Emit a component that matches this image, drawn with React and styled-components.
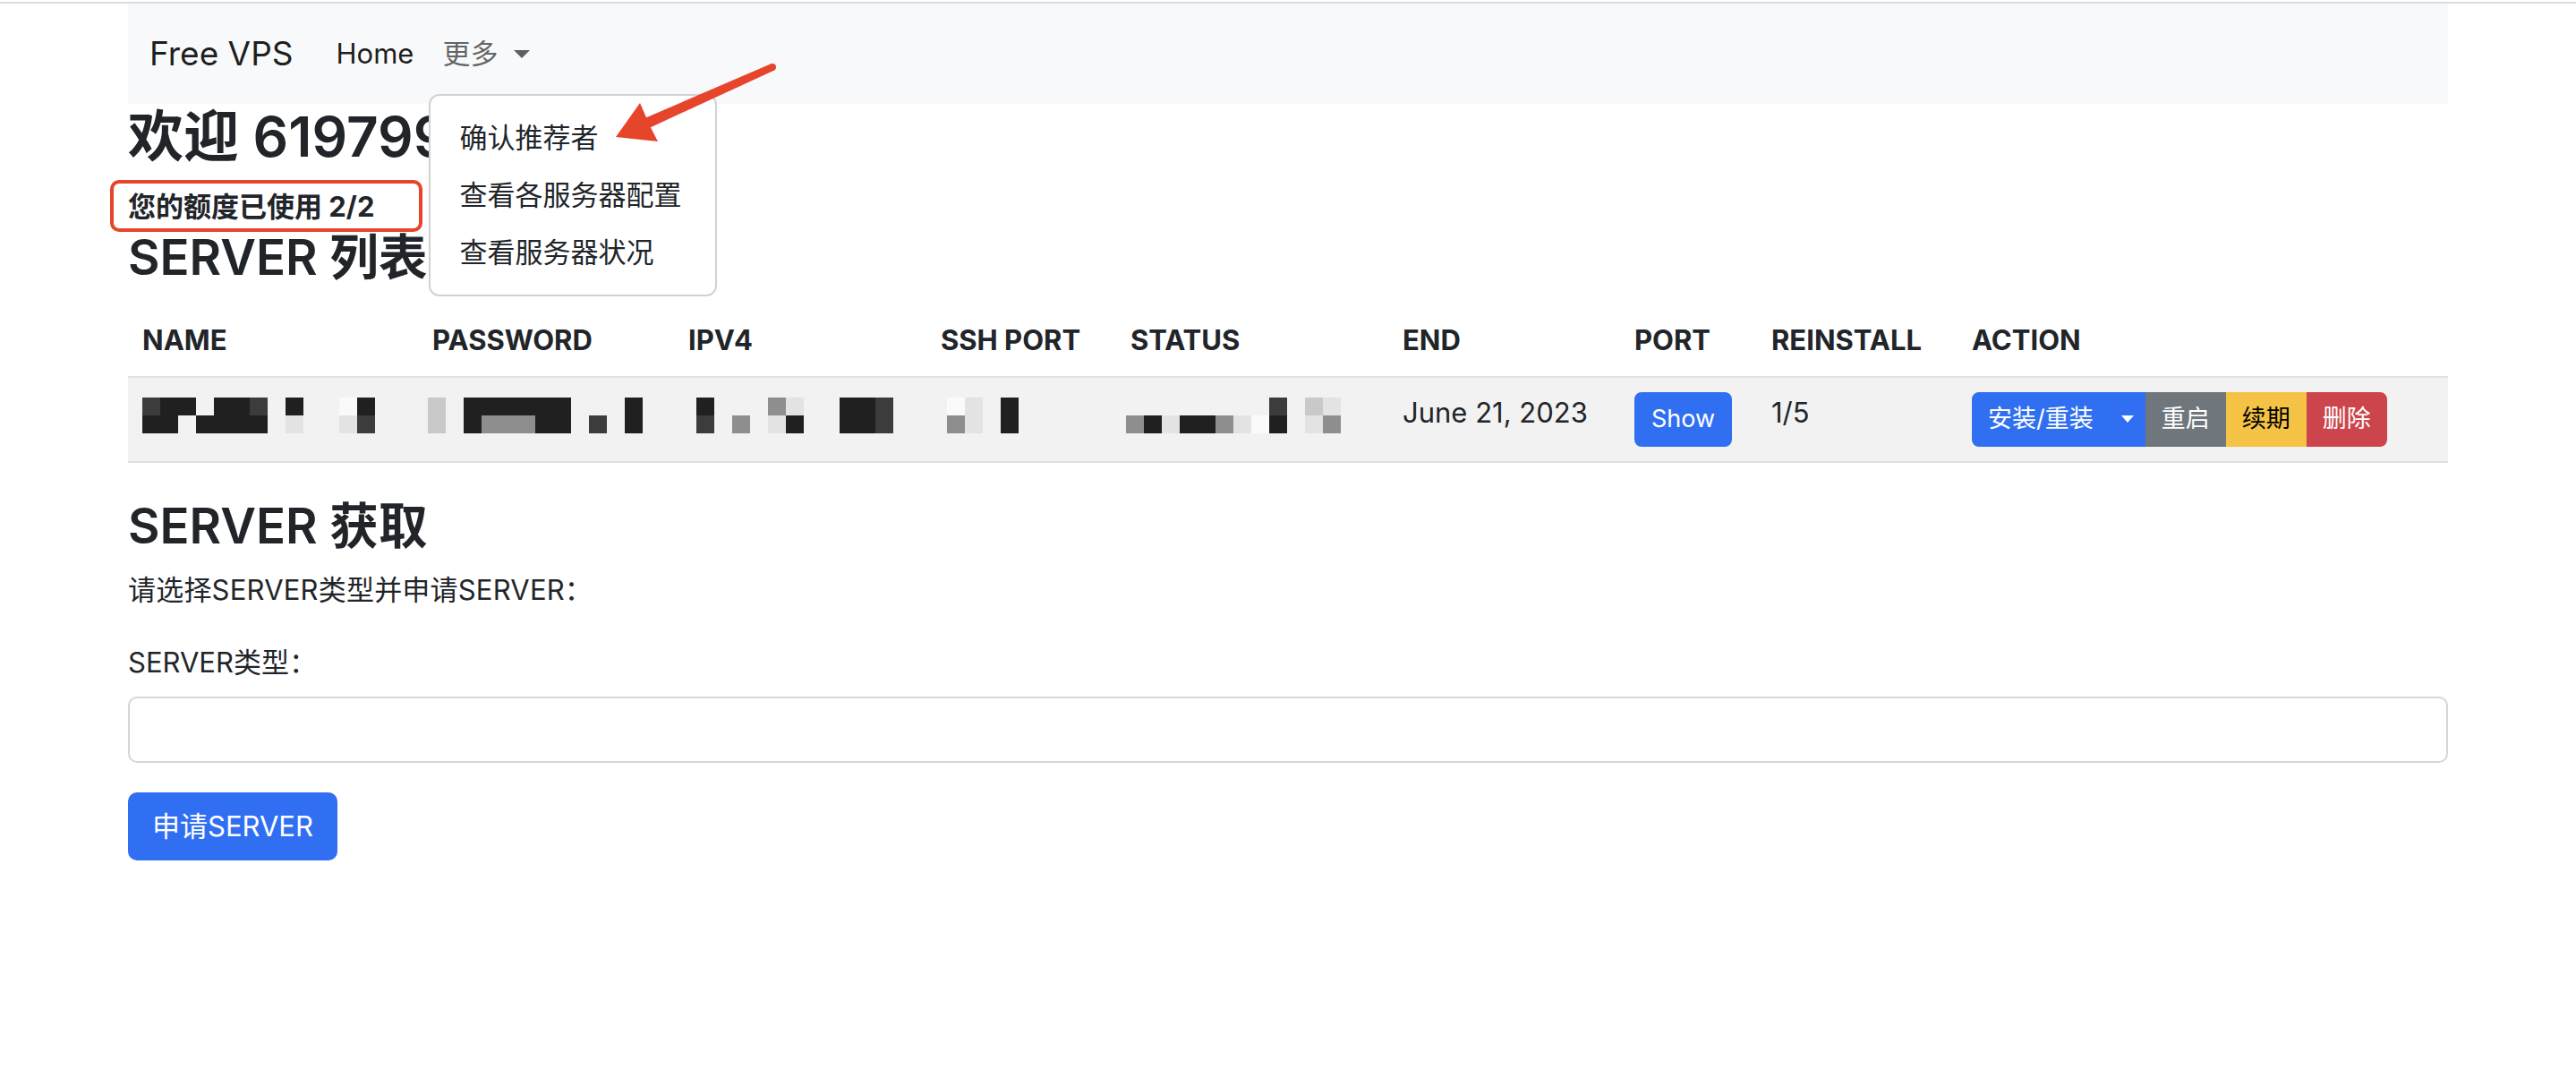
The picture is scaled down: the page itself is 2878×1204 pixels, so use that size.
import React from "react";
import styled, { createGlobalStyle } from "styled-components";

const GlobalStyle = createGlobalStyle`
  html, body {
    margin: 0;
    padding: 0;
    background: #fff;
  }
  body {
    font-family: Inter, "Noto Sans CJK SC", sans-serif;
    font-size: 31px;
    line-height: 1.5;
    color: #212529;
  }
  * {
    box-sizing: border-box;
  }
`;

const Page = styled.div`
  padding-top: 2px;
`;

const TopRule = styled.div`
  height: 2px;
  background: #dcdcdc;
`;

const Container = styled.div`
  position: relative;
  width: 2592px;
  margin: 0 auto;
`;

const Navbar = styled.nav`
  display: flex;
  align-items: center;
  height: 112px;
  padding: 0 24px;
  background: #f8f9fa;
`;

const Brand = styled.a`
  font-size: 37px;
  line-height: 1.5;
  color: rgba(0, 0, 0, 0.9);
  margin-right: 32px;
  text-decoration: none;
`;

const NavItem = styled.div`
  position: relative;
  align-self: stretch;
  display: flex;
  align-items: center;
`;

const NavLink = styled.a`
  display: flex;
  align-items: center;
  padding: 0 16px;
  color: ${(p) => (p.$active ? "rgba(0, 0, 0, 0.9)" : "rgba(0, 0, 0, 0.62)")};
  text-decoration: none;
`;

const Caret = styled.span`
  display: inline-block;
  width: 0;
  height: 0;
  margin-left: ${(p) => p.$gap}px;
  border-top: ${(p) => p.$h}px solid currentColor;
  border-left: ${(p) => p.$w}px solid transparent;
  border-right: ${(p) => p.$w}px solid transparent;
`;

const DropdownMenu = styled.div`
  position: absolute;
  top: 101px;
  left: 1px;
  width: 322px;
  padding: 15px 0;
  background: #fff;
  border: 2px solid rgba(0, 0, 0, 0.175);
  border-radius: 12px;
  z-index: 10;
`;

const DropdownItem = styled.a`
  display: block;
  padding: 8px 32px;
  line-height: 48px;
  color: #212529;
  white-space: nowrap;
`;

const Title = styled.h2`
  margin: 0 0 18px;
  font-size: 62px;
  font-weight: 600;
  line-height: 1.2;
  white-space: nowrap;
`;

const SectionTitle = styled.h3`
  margin: 0 0 ${(p) => p.$mb}px;
  font-size: 54.6px;
  font-weight: 600;
  line-height: 1.2;
  white-space: nowrap;
`;

const Quota = styled.div`
  position: relative;
  width: fit-content;
  font-weight: 700;
`;

const Highlight = styled.span`
  position: absolute;
  left: -20px;
  top: -7px;
  width: 349px;
  height: 58px;
  border: 4px solid #e5452b;
  border-radius: 10px;
`;

const Arrow = styled.svg`
  position: absolute;
  left: 527px;
  top: 56px;
  z-index: 11;
`;

const Table = styled.table`
  width: 100%;
  border-collapse: collapse;
  table-layout: fixed;
  margin-bottom: 38px;
`;

const Th = styled.th`
  text-align: left;
  padding: 16px;
  font-weight: 700;
  border-bottom: 2px solid #dee2e6;
  white-space: nowrap;
`;

const Row = styled.tr`
  background: #f2f2f2;
`;

const Td = styled.td`
  padding: 16px;
  vertical-align: top;
  border-bottom: 2px solid #dee2e6;
  white-space: nowrap;
`;

const Mosaic = styled.span`
  display: inline-grid;
  grid-auto-flow: column;
  grid-template-rows: 20px 20px;
  grid-auto-columns: 20px;
  margin-top: 6px;
  margin-left: ${(p) => p.$shift}px;
  vertical-align: top;
`;

const Pixel = styled.span`
  background: ${(p) => p.$c};
`;

const SmallButton = styled.button`
  display: inline-flex;
  align-items: center;
  height: 61px;
  padding: 0 ${(p) => (p.$pad != null ? p.$pad : 16)}px;
  font-family: inherit;
  font-size: 27px;
  line-height: 1.5;
  color: ${(p) => p.$fg || "#fff"};
  background: ${(p) => p.$bg};
  border: 2px solid ${(p) => p.$bg};
  border-radius: 8px;
`;

const ButtonGroup = styled.div`
  display: inline-flex;

  & > ${SmallButton} {
    border-radius: 0;
  }
  & > ${SmallButton}:first-child {
    border-radius: 8px 0 0 8px;
  }
  & > ${SmallButton}:last-child {
    border-radius: 0 8px 8px 0;
  }
`;

const Paragraph = styled.p`
  margin: 0 0 34px;
  letter-spacing: 0.2px;
`;

const Label = styled.label`
  display: block;
  margin-bottom: 15px;
`;

const SelectBox = styled.select`
  display: block;
  width: 100%;
  height: 74px;
  margin-bottom: 33px;
  background: #fff;
  border: 2px solid #d3d6da;
  border-radius: 10px;
  appearance: none;
`;

const PrimaryButton = styled.button`
  height: 76px;
  padding: 0 27px;
  font-family: inherit;
  font-size: 31px;
  line-height: 1.5;
  color: #fff;
  background: #316ff2;
  border: none;
  border-radius: 10px;
`;

const shades = {
  "#": "#202020",
  "=": "#3c3c3c",
  "+": "#8e8e8e",
  "-": "#c9c9c9",
  ".": "#e3e3e3",
  w: "#fafafa",
  " ": "transparent",
};

const mosaics = {
  name: { shift: 0, rows: ["=## ##= #  w#", "## #### .  .="] },
  password: { shift: -5, rows: ["- ######   #", "- #+++## = #"] },
  ipv4: { shift: 9, rows: ["#   +.  ##=", "= + .#  ##="] },
  ssh: { shift: 7, rows: ["w. #", "+. #"] },
  status: { shift: -5, rows: ["        = -.", "+#.##+.w# .+"] },
};

const Censored = ({ id }) => {
  const { shift, rows } = mosaics[id];
  const cells = [];
  for (let i = 0; i < rows[0].length; i++) {
    cells.push(<Pixel key={`a${i}`} $c={shades[rows[0][i]]} />);
    cells.push(<Pixel key={`b${i}`} $c={shades[rows[1][i]]} />);
  }
  return <Mosaic $shift={shift}>{cells}</Mosaic>;
};

const columns = [
  ["NAME", 324],
  ["PASSWORD", 286],
  ["IPV4", 282],
  ["SSH PORT", 212],
  ["STATUS", 304],
  ["END", 259],
  ["PORT", 153],
  ["REINSTALL", 224],
  ["ACTION", 548],
];

export default function App() {
  return (
    <Page>
      <GlobalStyle />
      <TopRule />
      <Container>
        <Navbar>
          <Brand>Free VPS</Brand>
          <NavLink $active>Home</NavLink>
          <NavItem>
            <NavLink>
              更多
              <Caret $gap={18} $w={9} $h={9} />
            </NavLink>
            <DropdownMenu>
              <DropdownItem>确认推荐者</DropdownItem>
              <DropdownItem>查看各服务器配置</DropdownItem>
              <DropdownItem>查看服务器状况</DropdownItem>
            </DropdownMenu>
          </NavItem>
        </Navbar>

        <Arrow width="210" height="110" viewBox="0 0 210 110">
          <polygon
            fill="#e6442b"
            points="18,93 45,55 52.1,71.2 191.4,11.3 194.6,18.7 56.9,82.2 65,98"
          />
          <circle cx="193" cy="15" r="4" fill="#e6442b" />
        </Arrow>

        <Title>欢迎 619799</Title>
        <Quota>
          <Highlight />
          您的额度已使用 2/2
        </Quota>
        <SectionTitle $mb={21}>SERVER 列表</SectionTitle>

        <Table>
          <colgroup>
            {columns.map(([name, w]) => (
              <col key={name} style={{ width: w }} />
            ))}
          </colgroup>
          <thead>
            <tr>
              {columns.map(([name]) => (
                <Th key={name}>{name}</Th>
              ))}
            </tr>
          </thead>
          <tbody>
            <Row>
              <Td>
                <Censored id="name" />
              </Td>
              <Td>
                <Censored id="password" />
              </Td>
              <Td>
                <Censored id="ipv4" />
              </Td>
              <Td>
                <Censored id="ssh" />
              </Td>
              <Td>
                <Censored id="status" />
              </Td>
              <Td>June 21, 2023</Td>
              <Td>
                <SmallButton $bg="#316ff2" $pad={17}>Show</SmallButton>
              </Td>
              <Td>1/5</Td>
              <Td>
                <ButtonGroup>
                  <SmallButton $bg="#316ff2">安装/重装</SmallButton>
                  <SmallButton $bg="#316ff2" $pad={11}>
                    <Caret $gap={0} $w={7} $h={8} />
                  </SmallButton>
                  <SmallButton $bg="#6f767c">重启</SmallButton>
                  <SmallButton $bg="#f4c244" $fg="#000">续期</SmallButton>
                  <SmallButton $bg="#cc454c">删除</SmallButton>
                </ButtonGroup>
              </Td>
            </Row>
          </tbody>
        </Table>

        <SectionTitle $mb={16}>SERVER 获取</SectionTitle>
        <Paragraph>请选择SERVER类型并申请SERVER：</Paragraph>
        <Label htmlFor="server-type">SERVER类型：</Label>
        <SelectBox id="server-type" />
        <PrimaryButton>申请SERVER</PrimaryButton>
      </Container>
    </Page>
  );
}
